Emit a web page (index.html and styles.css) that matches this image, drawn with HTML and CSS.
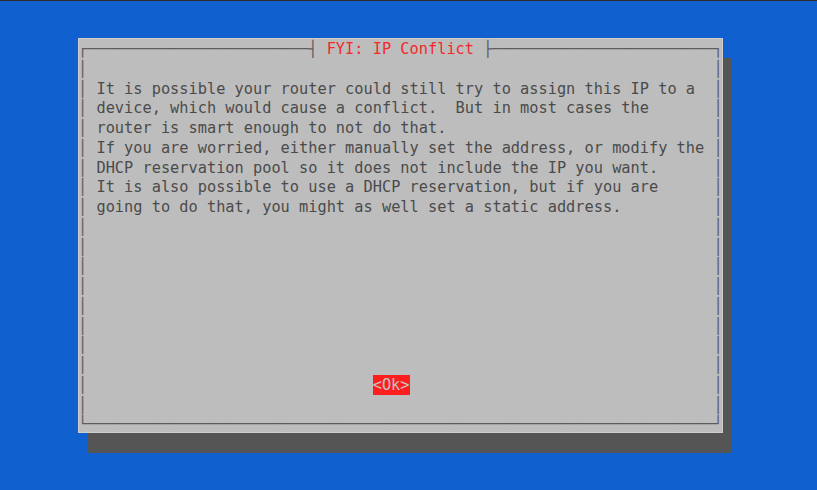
FILE: index.html
```html
<!DOCTYPE html>
<html lang="en">
<head>
  <meta charset="UTF-8" />
  <title>FYI: IP Conflict</title>
  <link rel="stylesheet" href="styles.css">
</head>
<body>
  <div class="screen">
    <div class="dialog">
      <div class="line">┌────────────────────────┤<span class="title"> FYI: IP Conflict </span>├────────────────────────┐</div>
      <div class="row"><span class="edge">│</span><span class="body"></span><span class="edge">│</span></div>
      <div class="row"><span class="edge">│</span><span class="body text">It is possible your router could still try to assign this IP to a</span><span class="edge">│</span></div>
      <div class="row"><span class="edge">│</span><span class="body text">device, which would cause a conflict.  But in most cases the</span><span class="edge">│</span></div>
      <div class="row"><span class="edge">│</span><span class="body text">router is smart enough to not do that.</span><span class="edge">│</span></div>
      <div class="row"><span class="edge">│</span><span class="body text">If you are worried, either manually set the address, or modify the</span><span class="edge">│</span></div>
      <div class="row"><span class="edge">│</span><span class="body text">DHCP reservation pool so it does not include the IP you want.</span><span class="edge">│</span></div>
      <div class="row"><span class="edge">│</span><span class="body text">It is also possible to use a DHCP reservation, but if you are</span><span class="edge">│</span></div>
      <div class="row"><span class="edge">│</span><span class="body text">going to do that, you might as well set a static address.</span><span class="edge">│</span></div>
      <div class="row"><span class="edge">│</span><span class="body"></span><span class="edge">│</span></div>
      <div class="row"><span class="edge">│</span><span class="body"></span><span class="edge">│</span></div>
      <div class="row"><span class="edge">│</span><span class="body"></span><span class="edge">│</span></div>
      <div class="row"><span class="edge">│</span><span class="body"></span><span class="edge">│</span></div>
      <div class="row"><span class="edge">│</span><span class="body"></span><span class="edge">│</span></div>
      <div class="row"><span class="edge">│</span><span class="body"></span><span class="edge">│</span></div>
      <div class="row"><span class="edge">│</span><span class="body"></span><span class="edge">│</span></div>
      <div class="row"><span class="edge">│</span><span class="body"></span><span class="edge">│</span></div>
      <div class="row"><span class="edge">│</span><span class="body buttons"><span class="btn">&lt;Ok&gt;</span></span><span class="edge">│</span></div>
      <div class="row"><span class="edge">│</span><span class="body"></span><span class="edge">│</span></div>
      <div class="line">└────────────────────────────────────────────────────────────────────┘</div>
    </div>
  </div>
</body>
</html>
```

FILE: styles.css
```css
body {
  margin: 0;
  background: #1160d0;
}

.screen {
  box-sizing: border-box;
  width: 817px;
  height: 490px;
  padding: 37px 0 0 78px;
  border-top: 1px solid #2b2b2b;
  background: #1160d0;
}

.dialog {
  width: 70ch;
  height: 395px;
  background: #bdbdbd;
  color: #4b4b4b;
  font-family: "DejaVu Sans Mono", monospace;
  font-size: 15.3px;
  line-height: 19.75px;
  outline: 1px solid #cdcdcd;
  outline-offset: -1px;
  box-shadow: 9px 20px 0 #555555;
}

.line, .row {
  box-sizing: border-box;
  height: 19.75px;
  padding-top: 2px;
}

.line {
  color: #5f5a62;
  white-space: pre;
}

.title {
  color: #f22a2a;
}

.row {
  display: flex;
}

.edge {
  color: #5f5a62;
}

.body {
  flex: 1;
  white-space: pre;
}

.text {
  padding-left: 1ch;
}

.buttons {
  padding-left: 31ch;
}

.btn {
  display: inline-block;
  margin-top: -2px;
  padding-top: 1px;
  height: 19.75px;
  box-sizing: border-box;
  background: #ff1e1e;
  color: #c4c4c4;
}
```
